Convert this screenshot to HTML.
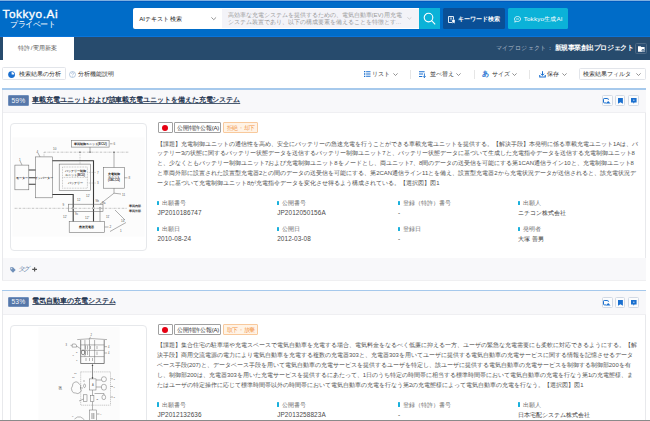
<!DOCTYPE html>
<html><head><meta charset="utf-8">
<style>
*{box-sizing:border-box;margin:0;padding:0}
html,body{width:650px;height:421px;overflow:hidden;background:#fff;font-family:"Liberation Sans",sans-serif;color:#333}
.abs{position:absolute}
.t{position:absolute;line-height:10px;white-space:nowrap}
svg{position:absolute;overflow:visible}
</style></head><body>
<div class="abs" style="left:0px;top:0px;width:650.00px;height:37.00px;background:#006cc8"></div>
<div class="abs" style="left:0px;top:0px;width:650.00px;height:1.00px;background:#7fb0e0"></div>
<div class="abs" style="left:0px;top:1px;width:650.00px;height:1.00px;background:#005bbf"></div>
<div class="abs" style="left:0px;top:36px;width:650.00px;height:1.00px;background:#0a74da"></div>
<div class="t" style="left:2.4px;top:8.90px;font-size:11.800px;color:#fff;font-weight:normal;letter-spacing:0.6px;-webkit-text-stroke:0.35px #fff">Tokkyo.Ai</div>
<div class="t" style="left:10.4px;top:19.70px;font-size:7.500px;color:#fff;font-weight:normal;letter-spacing:-0.500px;">プライベート</div>
<div class="abs" style="left:132.5px;top:8.2px;width:286.70px;height:20.70px;background:#fff;border-radius:2px 0 0 2px"></div>
<div class="t" style="left:139.2px;top:13.60px;font-size:6.100px;color:#222;font-weight:normal;letter-spacing:0.100px;">AIテキスト検索</div>
<svg class="abs" style="left:211px;top:17.3px" width="5.5" height="3.2" viewBox="0 0 5.5 3.2"><path d="M0.4 0.4 L2.75 2.7 L5.1 0.4" fill="none" stroke="#777" stroke-width="0.8"/></svg>
<div class="abs" style="left:222px;top:9.2px;width:197.20px;height:18.80px;background:#f3f3f8"></div>
<div class="t" style="left:227.5px;top:9.50px;font-size:6.000px;color:#9a9a9a;font-weight:normal;">高効率な充電システムを提供するための、電気自動車(EV)用充電</div>
<div class="t" style="left:227.5px;top:17.20px;font-size:6.000px;color:#9a9a9a;font-weight:normal;">システム装置であり、以下の構成要素を備えることを特徴とす…</div>
<svg class="abs" style="left:407px;top:17.4px" width="4.8" height="2.6" viewBox="0 0 4.8 2.6"><path d="M0.4 0.4 L2.4 2.1 L4.3999999999999995 0.4" fill="none" stroke="#bbb" stroke-width="0.6"/></svg>
<div class="abs" style="left:419.1px;top:8.2px;width:20.90px;height:20.70px;background:#0bb2d8"></div>
<svg style="left:419.1px;top:8.2px" width="21" height="21" viewBox="0 0 21 21"><circle cx="9.5" cy="9.6" r="4.3" fill="none" stroke="#fff" stroke-width="1.1"/><path d="M12.6 12.7 L16.2 16.3" stroke="#fff" stroke-width="1.1"/></svg>
<div class="abs" style="left:443.2px;top:8.4px;width:62.20px;height:20.40px;background:#0a4f96;border-radius:1.5px"></div>
<svg style="left:448.2px;top:15.7px" width="7.2" height="7" viewBox="0 0 7.2 7"><path d="M4 6.5 H0.5 V0.5 H5.5 V3.5" fill="none" stroke="#eef3fa" stroke-width="0.95"/><path d="M1.8 2 H4.2 M3 2 V4.6" stroke="#eef3fa" stroke-width="0.7"/><circle cx="5.5" cy="5" r="1.5" fill="#fff"/><path d="M4.3 6.9 Q5.5 5.8 6.9 6.9" stroke="#fff" stroke-width="0.9" fill="none"/></svg>
<div class="t" style="left:458.3px;top:13.80px;font-size:5.900px;color:#fff;font-weight:bold;letter-spacing:-0.100px;">キーワード検索</div>
<div class="abs" style="left:508.2px;top:8.2px;width:59.70px;height:20.70px;background:#0bb2d8;border-radius:1.5px"></div>
<svg style="left:513.5px;top:15.8px" width="7" height="7" viewBox="0 0 7 7"><path d="M3.5 0.5 C5.5 0.5 6.5 1.6 6.5 3 C6.5 4.5 5.4 5.5 3.5 5.5 C3 5.5 2.5 5.4 2.1 5.3 L0.8 6.2 L1.1 4.7 C0.7 4.3 0.5 3.7 0.5 3 C0.5 1.6 1.5 0.5 3.5 0.5 Z" fill="none" stroke="#fff" stroke-width="0.75"/><path d="M2 3 H5" stroke="#fff" stroke-width="0.7"/></svg>
<div class="t" style="left:523.7px;top:13.90px;font-size:6.200px;color:#fff;font-weight:normal;letter-spacing:0.200px;">Tokkyo生成AI</div>
<div class="abs" style="left:0px;top:37px;width:650.00px;height:22.60px;background:#274b6d"></div>
<div class="abs" style="left:2.7px;top:37px;width:71.10px;height:22.60px;background:#fff"></div>
<div class="t" style="left:18.3px;top:43.40px;font-size:6.200px;color:#555;font-weight:normal;letter-spacing:0.200px;">特許/実用新案</div>
<div class="t" style="left:495.7px;top:43.30px;font-size:6.400px;color:#b0bccb;font-weight:normal;letter-spacing:0.400px;">マイプロジェクト：</div>
<div class="t" style="left:554.6px;top:43.30px;font-size:6.550px;color:#fff;font-weight:bold;letter-spacing:-0.450px;">新規事業創出プロジェクト</div>
<div class="abs" style="left:635px;top:43.4px;width:11.60px;height:10.80px;border:0.6px solid #4d6985;border-radius:1.5px;background:#2b4f73"></div>
<svg style="left:637.5px;top:46px" width="7" height="6" viewBox="0 0 7 6"><path d="M0 0.3 H2.6 L3.3 1 H6.6 V5.7 H0 Z" fill="#fff"/><circle cx="5" cy="4.2" r="1.3" fill="#2b4f73"/><circle cx="5" cy="4.2" r="0.6" fill="#fff"/></svg>
<div class="abs" style="left:0px;top:59.6px;width:650.00px;height:28.40px;background:#fff"></div>
<div class="abs" style="left:2.4px;top:67px;width:63.60px;height:13.40px;border:0.6px solid #e2e5ea;border-radius:1.5px;background:#fff"></div>
<svg style="left:7.8px;top:70.8px" width="7.2" height="7.2" viewBox="0 0 8 8"><circle cx="4" cy="4" r="3.8" fill="#1a6fcf"/><path d="M4 4 V1 A3 3 0 0 1 7 4 Z" fill="#fff"/></svg>
<div class="t" style="left:18.6px;top:69.20px;font-size:6.000px;color:#333;font-weight:normal;">検索結果の分析</div>
<svg style="left:69.3px;top:70.8px" width="7" height="7" viewBox="0 0 7 7"><circle cx="3.5" cy="3.5" r="3" fill="none" stroke="#8aa7cc" stroke-width="0.6"/><path d="M2.5 2.7 C2.5 1.3 4.6 1.3 4.6 2.6 C4.6 3.4 3.5 3.4 3.5 4.4" fill="none" stroke="#8aa7cc" stroke-width="0.6"/><circle cx="3.5" cy="5.4" r="0.35" fill="#8aa7cc"/></svg>
<div class="t" style="left:78px;top:69.20px;font-size:6.000px;color:#333;font-weight:normal;">分析機能説明</div>
<svg style="left:363.8px;top:71.2px" width="6.5" height="6" viewBox="0 0 6.5 6"><path d="M0 0 H1.3 V1.3 H0Z M0 2.35 H1.3 V3.65 H0Z M0 4.7 H1.3 V6 H0Z M2.1 0.15 H6.5 V1.15 H2.1Z M2.1 2.5 H6.5 V3.5 H2.1Z M2.1 4.85 H6.5 V5.85 H2.1Z" fill="#1a6fcf"/></svg>
<div class="t" style="left:372px;top:69.30px;font-size:6.000px;color:#333;font-weight:normal;">リスト</div>
<svg class="abs" style="left:392.8px;top:72.6px" width="5" height="3" viewBox="0 0 5 3"><path d="M0.4 0.4 L2.5 2.5 L4.6 0.4" fill="none" stroke="#666" stroke-width="0.7"/></svg>
<div class="abs" style="left:410.1px;top:70px;width:0.60px;height:9.00px;background:#e6e6e6"></div>
<svg style="left:419px;top:70.8px" width="7" height="7" viewBox="0 0 7 7"><path d="M0 0.3 H5.6 V1.3 H0Z M0 2.6 H4 V3.6 H0Z M0 4.9 H3.3 V5.9 H0Z" fill="#1a6fcf"/><path d="M5.4 2.4 V6.6 M4.2 5.3 L5.4 6.6 L6.6 5.3" fill="none" stroke="#1a6fcf" stroke-width="0.9"/></svg>
<div class="t" style="left:429.8px;top:69.30px;font-size:6.000px;color:#333;font-weight:normal;">並べ替え</div>
<svg class="abs" style="left:455.6px;top:72.6px" width="5" height="3" viewBox="0 0 5 3"><path d="M0.4 0.4 L2.5 2.5 L4.6 0.4" fill="none" stroke="#666" stroke-width="0.7"/></svg>
<div class="abs" style="left:473.8px;top:70px;width:0.60px;height:9.00px;background:#e6e6e6"></div>
<div class="t" style="left:482.3px;top:69.10px;font-size:7.200px;color:#1a6fcf;font-weight:bold;">あ</div>
<div class="t" style="left:491.8px;top:69.30px;font-size:6.000px;color:#333;font-weight:normal;">サイズ</div>
<svg class="abs" style="left:511.8px;top:72.6px" width="5" height="3" viewBox="0 0 5 3"><path d="M0.4 0.4 L2.5 2.5 L4.6 0.4" fill="none" stroke="#666" stroke-width="0.7"/></svg>
<div class="abs" style="left:529.4px;top:70px;width:0.60px;height:9.00px;background:#e6e6e6"></div>
<svg style="left:538.8px;top:70.8px" width="7" height="7" viewBox="0 0 7 7"><path d="M3.5 0.2 V4.3 M1.9 2.7 L3.5 4.4 L5.1 2.7" fill="none" stroke="#1a6fcf" stroke-width="1"/><path d="M0.2 4 V6.6 H6.8 V4 H5.7 V5.4 H1.3 V4 Z" fill="#1a6fcf"/></svg>
<div class="t" style="left:547.4px;top:69.30px;font-size:6.000px;color:#333;font-weight:normal;">保存</div>
<svg class="abs" style="left:562px;top:72.6px" width="5" height="3" viewBox="0 0 5 3"><path d="M0.4 0.4 L2.5 2.5 L4.6 0.4" fill="none" stroke="#666" stroke-width="0.7"/></svg>
<div class="abs" style="left:578.5px;top:67.6px;width:67.50px;height:12.70px;border:0.6px solid #e2e5ea;border-radius:1.5px;background:#fff"></div>
<div class="t" style="left:583.3px;top:69.00px;font-size:6.000px;color:#333;font-weight:normal;">検索結果フィルタ</div>
<svg class="abs" style="left:635.8px;top:72.6px" width="5" height="3" viewBox="0 0 5 3"><path d="M0.4 0.4 L2.5 2.5 L4.6 0.4" fill="none" stroke="#666" stroke-width="0.7"/></svg>
<div class="abs" style="left:2.2px;top:89.6px;width:644.20px;height:190.40px;background:#fff;border-left:0.8px solid #e8e9ec;border-right:0.8px solid #e8e9ec"></div>
<div class="abs" style="left:2.4px;top:88px;width:643.60px;height:1.60px;background:#a6c9ec"></div>
<div class="abs" style="left:3.3px;top:89.6px;width:642.30px;height:23.40px;background:#f8f8fa;border-bottom:0.5px solid #efeff2"></div>
<div class="abs" style="left:7.8px;top:95.1px;width:20.90px;height:10.70px;background:#5677a9;border:0.5px solid #7190bd;border-radius:1px"></div>
<div class="t" style="left:11.5px;top:95.70px;font-size:6.700px;color:#f4f7fb;font-weight:normal;letter-spacing:0.1px">59%</div>
<div class="t" style="left:32.3px;top:94.60px;font-size:6.930px;color:#1f3550;font-weight:bold;letter-spacing:-0.070px;text-decoration:underline;text-underline-offset:1px;text-decoration-thickness:0.55px;text-decoration-color:#4a5b70">車載充電ユニットおよび該車載充電ユニットを備えた充電システム</div>
<div class="abs" style="left:601.7px;top:95.2px;width:10.90px;height:11.30px;background:#fbfcfd;border:0.7px solid #d3dae5;border-radius:1.5px"></div>
<div class="abs" style="left:614.5px;top:95.2px;width:10.90px;height:11.30px;background:#fbfcfd;border:0.7px solid #d3dae5;border-radius:1.5px"></div>
<div class="abs" style="left:627.8px;top:95.2px;width:10.90px;height:11.30px;background:#fbfcfd;border:0.7px solid #d3dae5;border-radius:1.5px"></div>
<svg style="left:603.4px;top:98px" width="7.6" height="5.4" viewBox="0 0 7.6 5.4"><path d="M3.2 4.9 H1.2 Q0.5 4.9 0.5 4.2 V1.2 Q0.5 0.5 1.2 0.5 H4.6 Q5.3 0.5 5.3 1.2 V2" fill="none" stroke="#1a6fcf" stroke-width="1"/><path d="M2.8 5.4 L5.2 2.9 L7.6 5.4 Z" fill="#1a6fcf"/></svg>
<svg style="left:617.6px;top:98px" width="4.9" height="5.7" viewBox="0 0 4.9 5.7"><path d="M0 0 H4.9 V5.7 L2.45 4.3 L0 5.7 Z" fill="#1a6fcf"/></svg>
<svg style="left:630.7px;top:98px" width="5.6" height="5.7" viewBox="0 0 5.6 5.7"><path d="M0 0 H5.6 V4.5 H3.4 L2.8 5.7 L2.2 4.5 H0 Z" fill="#1a6fcf"/><path d="M2.1 2.2 H3.5" stroke="#fff" stroke-width="0.8"/></svg>
<div class="abs" style="left:10.1px;top:122.8px;width:136.60px;height:128.00px;border:0.8px solid #e6e8eb;border-radius:4px;background:#fff"></div>
<svg style="left:0;top:0" width="650" height="421" viewBox="0 0 650 421"><rect x="12.5" y="137.5" width="132" height="99" fill="#fcfcfc"/><path d="M44 152.2 H129" stroke="#8a8a8a" stroke-width="0.5" fill="none" stroke-dasharray="2.2 0.8 0.5 0.8"/><path d="M44 152.2 V156.9" stroke="#8a8a8a" stroke-width="0.5" fill="none" stroke-dasharray="0.8 0.8"/><rect x="71.3" y="140.3" width="37.8" height="6.8" stroke="#6a6a6a" stroke-width="0.55" fill="none" fill="#fff"/><text transform="translate(90.2,144.9) scale(0.1)" font-size="33.0" fill="#333" text-anchor="middle" font-weight="bold" font-family="Liberation Sans">車両制御ユニット(ECU)</text><path d="M90 147.1 V152.2" stroke="#6a6a6a" stroke-width="0.55" fill="none"/><path d="M110 143.8 H112.5" stroke="#6a6a6a" stroke-width="0.55" fill="none"/><text transform="translate(113.5,145) scale(0.1)" font-size="30.0" fill="#555" text-anchor="start" font-weight="normal" font-family="Liberation Sans">6</text><rect x="79.4" y="151.6" width="1.2" height="1.2" fill="#555"/><rect x="89.4" y="151.6" width="1.2" height="1.2" fill="#555"/><rect x="113.4" y="151.6" width="1.2" height="1.2" fill="#555"/><path d="M80 152.2 V164.1" stroke="#8a8a8a" stroke-width="0.5" fill="none" stroke-dasharray="0.8 0.8"/><path d="M114 152.2 V167.4" stroke="#6a6a6a" stroke-width="0.55" fill="none"/><rect x="14.9" y="165.1" width="13.9" height="24.7" stroke="#6a6a6a" stroke-width="0.55" fill="none" fill="#fff"/><text transform="translate(21.9,179) scale(0.1)" font-size="32.0" fill="#222" text-anchor="middle" font-weight="bold" font-family="Liberation Sans">モーター</text><path d="M20 161 L22 165" stroke="#6a6a6a" stroke-width="0.55" fill="none"/><text transform="translate(19,160.5) scale(0.1)" font-size="30.0" fill="#555" text-anchor="start" font-weight="normal" font-family="Liberation Sans">1</text><rect x="35.5" y="156.9" width="16.9" height="40.9" stroke="#6a6a6a" stroke-width="0.55" fill="none" fill="#fff"/><text transform="translate(44,179) scale(0.1)" font-size="30.0" fill="#222" text-anchor="middle" font-weight="bold" font-family="Liberation Sans">インバーター</text><path d="M38 153 L40 156.9" stroke="#6a6a6a" stroke-width="0.55" fill="none"/><text transform="translate(36.5,152.5) scale(0.1)" font-size="30.0" fill="#555" text-anchor="start" font-weight="normal" font-family="Liberation Sans">4</text><text transform="translate(53,149.8) scale(0.1)" font-size="30.0" fill="#555" text-anchor="start" font-weight="normal" font-family="Liberation Sans">10</text><path d="M28.8 170 H35.5 M28.8 177.8 H35.5 M28.8 184.3 H35.5" stroke="#3a3a3a" stroke-width="1.1" fill="none"/><path d="M52.4 160.7 H93.5 V221.5" stroke="#3a3a3a" stroke-width="1.1" fill="none"/><path d="M52.4 194.5 H73.2 V221.5" stroke="#3a3a3a" stroke-width="1.1" fill="none"/><rect x="59.2" y="164.1" width="31.1" height="26.6" stroke="#6a6a6a" stroke-width="0.55" fill="none" fill="#fff"/><rect x="62.5" y="167" width="24.9" height="21.2" stroke="#8a8a8a" stroke-width="0.5" fill="none" stroke-dasharray="0.8 0.8"/><path d="M62.5 177.4 H87.4" stroke="#8a8a8a" stroke-width="0.5" fill="none" stroke-dasharray="0.8 0.8"/><text transform="translate(75,171.6) scale(0.1)" font-size="28.0" fill="#333" text-anchor="middle" font-weight="bold" font-family="Liberation Sans">バッテリー制御</text><text transform="translate(75,175.6) scale(0.1)" font-size="28.0" fill="#333" text-anchor="middle" font-weight="bold" font-family="Liberation Sans">ユニット(BCU)</text><text transform="translate(75,184.2) scale(0.1)" font-size="29.0" fill="#333" text-anchor="middle" font-weight="bold" font-family="Liberation Sans">バッテリー</text><path d="M87.4 172.4 H96" stroke="#8a8a8a" stroke-width="0.5" fill="none" stroke-dasharray="0.8 0.8"/><text transform="translate(97,173.6) scale(0.1)" font-size="30.0" fill="#555" text-anchor="start" font-weight="normal" font-family="Liberation Sans">7</text><path d="M87.4 183 H96" stroke="#8a8a8a" stroke-width="0.5" fill="none" stroke-dasharray="0.8 0.8"/><text transform="translate(97,184.2) scale(0.1)" font-size="30.0" fill="#555" text-anchor="start" font-weight="normal" font-family="Liberation Sans">3</text><rect x="103.6" y="167.4" width="20.8" height="20.8" stroke="#6a6a6a" stroke-width="0.55" fill="none" fill="#fff"/><text transform="translate(114,175.4) scale(0.1)" font-size="28.0" fill="#222" text-anchor="middle" font-weight="bold" font-family="Liberation Sans">充電制御</text><text transform="translate(114,178.4) scale(0.1)" font-size="28.0" fill="#222" text-anchor="middle" font-weight="bold" font-family="Liberation Sans">ユニット</text><text transform="translate(114,181.4) scale(0.1)" font-size="26.0" fill="#222" text-anchor="middle" font-weight="bold" font-family="Liberation Sans">(OBC,CU)</text><path d="M124.4 177.8 H127.5" stroke="#6a6a6a" stroke-width="0.55" fill="none"/><text transform="translate(128.5,179) scale(0.1)" font-size="30.0" fill="#555" text-anchor="start" font-weight="normal" font-family="Liberation Sans">8</text><path d="M114 188.2 V193.2 L100 204.2 M114 193.2 L121 194" stroke="#6a6a6a" stroke-width="0.55" fill="none"/><text transform="translate(122,195.5) scale(0.1)" font-size="30.0" fill="#555" text-anchor="start" font-weight="normal" font-family="Liberation Sans">11</text><path d="M14.6 208.3 H127" stroke="#8a8a8a" stroke-width="0.5" fill="none" stroke-dasharray="2.2 0.8 0.5 0.8"/><rect x="68.5" y="204.2" width="34.5" height="7.3" stroke="#6a6a6a" stroke-width="0.55" fill="none"/><circle cx="73.1" cy="208.2" r="0.9" fill="#fff" stroke="#555" stroke-width="0.45"/><circle cx="93.4" cy="208.2" r="0.9" fill="#fff" stroke="#555" stroke-width="0.45"/><circle cx="100" cy="208.2" r="0.9" fill="#fff" stroke="#555" stroke-width="0.45"/><path d="M100 209.1 V221.5" stroke="#6a6a6a" stroke-width="0.55" fill="none"/><text transform="translate(128.5,206.5) scale(0.1)" font-size="28.0" fill="#333" text-anchor="start" font-weight="bold" font-family="Liberation Sans">車両内部</text><text transform="translate(128.5,211.6) scale(0.1)" font-size="28.0" fill="#333" text-anchor="start" font-weight="bold" font-family="Liberation Sans">車両外部</text><text transform="translate(62.6,206) scale(0.1)" font-size="30.0" fill="#555" text-anchor="start" font-weight="normal" font-family="Liberation Sans">9</text><text transform="translate(77,200.5) scale(0.1)" font-size="30.0" fill="#555" text-anchor="start" font-weight="normal" font-family="Liberation Sans">12</text><text transform="translate(86,197.4) scale(0.1)" font-size="30.0" fill="#555" text-anchor="start" font-weight="normal" font-family="Liberation Sans">12'</text><text transform="translate(95.5,202) scale(0.1)" font-size="30.0" fill="#555" text-anchor="start" font-weight="normal" font-family="Liberation Sans">9b</text><text transform="translate(102,203.6) scale(0.1)" font-size="30.0" fill="#555" text-anchor="start" font-weight="normal" font-family="Liberation Sans">9a</text><text transform="translate(75,215) scale(0.1)" font-size="30.0" fill="#555" text-anchor="start" font-weight="normal" font-family="Liberation Sans">9c</text><text transform="translate(63,218) scale(0.1)" font-size="30.0" fill="#555" text-anchor="start" font-weight="normal" font-family="Liberation Sans">12'</text><text transform="translate(85,219) scale(0.1)" font-size="30.0" fill="#555" text-anchor="start" font-weight="normal" font-family="Liberation Sans">12"</text><text transform="translate(106,218) scale(0.1)" font-size="30.0" fill="#555" text-anchor="start" font-weight="normal" font-family="Liberation Sans">11'</text><path d="M115 210 L125 220" stroke="#6a6a6a" stroke-width="0.55" fill="none"/><text transform="translate(121,222) scale(0.1)" font-size="30.0" fill="#555" text-anchor="start" font-weight="normal" font-family="Liberation Sans">14</text><rect x="69.2" y="221.5" width="35.4" height="10.8" stroke="#6a6a6a" stroke-width="0.55" fill="none" fill="#fff"/><text transform="translate(86.9,228.3) scale(0.1)" font-size="32.0" fill="#333" text-anchor="middle" font-weight="bold" font-family="Liberation Sans">急速充電器</text><path d="M104.6 227 H108.5" stroke="#6a6a6a" stroke-width="0.55" fill="none"/><text transform="translate(109.5,228.2) scale(0.1)" font-size="30.0" fill="#555" text-anchor="start" font-weight="normal" font-family="Liberation Sans">2</text><path d="M110 231.5 L126 222.5" stroke="#6a6a6a" stroke-width="0.55" fill="none"/><text transform="translate(120,231.5) scale(0.1)" font-size="30.0" fill="#555" text-anchor="start" font-weight="normal" font-family="Liberation Sans">1</text></svg>
<div class="abs" style="left:157.5px;top:122.4px;width:15.20px;height:11.10px;border:0.6px solid #a0a0a0;border-radius:1px;background:#fff"></div>
<svg style="left:162.1px;top:125px" width="6" height="6" viewBox="0 0 6 6"><circle cx="3" cy="3" r="3" fill="#e60012"/></svg>
<div class="abs" style="left:174.2px;top:122.4px;width:47.00px;height:11.10px;border:0.6px solid #a0a0a0;border-radius:1px;background:#fff"></div>
<div class="t" style="left:177.2px;top:123.00px;font-size:6.000px;color:#333;font-weight:normal;letter-spacing:-0.25px">公開特許公報(A)</div>
<div class="abs" style="left:223.4px;top:122.4px;width:34.70px;height:11.10px;border:0.7px solid #f8c99c;border-radius:1px;background:#fff3e6"></div>
<div class="t" style="left:226.8px;top:123.00px;font-size:6.000px;color:#f39a50;font-weight:normal;letter-spacing:-0.4px">拒絶・却下</div>
<div class="t" style="left:157px;top:138.50px;font-size:5.930px;color:#505050;font-weight:normal;">【課題】充電制御ユニットの通信性を高め、安全にバッテリーの急速充電を行うことができる車載充電ユニットを提供する。【解決手段】本発明に係る車載充電ユニット<span style="letter-spacing:0;font-size:5.93px">1A</span>は、バ</div>
<div class="t" style="left:157px;top:148.40px;font-size:5.930px;color:#505050;font-weight:normal;">ッテリー<span style="letter-spacing:0;font-size:5.93px">3</span>の状態に関するバッテリー状態データを送信するバッテリー制御ユニット<span style="letter-spacing:0;font-size:5.93px">7</span>と、バッテリー状態データに基づいて生成した充電指令データを送信する充電制御ユニット<span style="letter-spacing:0;font-size:5.93px">8</span></div>
<div class="t" style="left:157px;top:158.30px;font-size:5.930px;color:#505050;font-weight:normal;">と、少なくともバッテリー制御ユニット<span style="letter-spacing:0;font-size:5.93px">7</span>および充電制御ユニット<span style="letter-spacing:0;font-size:5.93px">8</span>をノードとし、両ユニット<span style="letter-spacing:0;font-size:5.93px">7</span>、<span style="letter-spacing:0;font-size:5.93px">8</span>間のデータの送受信を可能にする第<span style="letter-spacing:0;font-size:5.93px">1CAN</span>通信ライン<span style="letter-spacing:0;font-size:5.93px">10</span>と、充電制御ユニット<span style="letter-spacing:0;font-size:5.93px">8</span></div>
<div class="t" style="left:157px;top:168.20px;font-size:5.930px;color:#505050;font-weight:normal;">と車両外部に設置された設置型充電器<span style="letter-spacing:0;font-size:5.93px">2</span>との間のデータの送受信を可能にする、第<span style="letter-spacing:0;font-size:5.93px">2CAN</span>通信ライン<span style="letter-spacing:0;font-size:5.93px">11</span>とを備え、設置型充電器<span style="letter-spacing:0;font-size:5.93px">2</span>から充電状況データが送信されると、該充電状況デ</div>
<div class="t" style="left:157px;top:178.10px;font-size:5.930px;color:#505050;font-weight:normal;">ータに基づいて充電制御ユニット<span style="letter-spacing:0;font-size:5.93px">8</span>が充電指令データを変化させ得るよう構成されている。【選択図】図<span style="letter-spacing:0;font-size:5.93px">1</span></div>
<div class="abs" style="left:157.4px;top:200.7px;width:1.50px;height:4.60px;background:#1ab0dc;border-radius:0.6px"></div>
<div class="t" style="left:161.9px;top:198.00px;font-size:5.900px;color:#6a6a6a;font-weight:normal;">出願番号</div>
<div class="t" style="left:157.4px;top:207.80px;font-size:6.400px;color:#4a4a4a;font-weight:normal;letter-spacing:0.1px">JP2010186747</div>
<div class="abs" style="left:277.2px;top:200.7px;width:1.50px;height:4.60px;background:#1ab0dc;border-radius:0.6px"></div>
<div class="t" style="left:281.7px;top:198.00px;font-size:5.900px;color:#6a6a6a;font-weight:normal;">公開番号</div>
<div class="t" style="left:277.2px;top:207.80px;font-size:6.400px;color:#4a4a4a;font-weight:normal;letter-spacing:0.1px">JP2012050156A</div>
<div class="abs" style="left:398px;top:200.7px;width:1.50px;height:4.60px;background:#1ab0dc;border-radius:0.6px"></div>
<div class="t" style="left:402.5px;top:198.00px;font-size:5.900px;color:#6a6a6a;font-weight:normal;">登録（特許）番号</div>
<div class="t" style="left:398px;top:207.80px;font-size:6.400px;color:#4a4a4a;font-weight:normal;letter-spacing:0.1px">-</div>
<div class="abs" style="left:518px;top:200.7px;width:1.50px;height:4.60px;background:#1ab0dc;border-radius:0.6px"></div>
<div class="t" style="left:522.5px;top:198.00px;font-size:5.900px;color:#6a6a6a;font-weight:normal;">出願人</div>
<div class="t" style="left:518px;top:207.80px;font-size:5.970px;color:#3a3a3a;font-weight:normal;letter-spacing:-0.030px;">ニチコン株式会社</div>
<div class="abs" style="left:157.4px;top:226.9px;width:1.50px;height:4.60px;background:#1ab0dc;border-radius:0.6px"></div>
<div class="t" style="left:161.9px;top:224.20px;font-size:5.900px;color:#6a6a6a;font-weight:normal;">出願日</div>
<div class="t" style="left:157.4px;top:234.20px;font-size:6.400px;color:#4a4a4a;font-weight:normal;letter-spacing:0.1px">2010-08-24</div>
<div class="abs" style="left:277.2px;top:226.9px;width:1.50px;height:4.60px;background:#1ab0dc;border-radius:0.6px"></div>
<div class="t" style="left:281.7px;top:224.20px;font-size:5.900px;color:#6a6a6a;font-weight:normal;">公開日</div>
<div class="t" style="left:277.2px;top:234.20px;font-size:6.400px;color:#4a4a4a;font-weight:normal;letter-spacing:0.1px">2012-03-08</div>
<div class="abs" style="left:398px;top:226.9px;width:1.50px;height:4.60px;background:#1ab0dc;border-radius:0.6px"></div>
<div class="t" style="left:402.5px;top:224.20px;font-size:5.900px;color:#6a6a6a;font-weight:normal;">登録日</div>
<div class="t" style="left:398px;top:234.20px;font-size:6.400px;color:#4a4a4a;font-weight:normal;letter-spacing:0.1px">-</div>
<div class="abs" style="left:518px;top:226.9px;width:1.50px;height:4.60px;background:#1ab0dc;border-radius:0.6px"></div>
<div class="t" style="left:522.5px;top:224.20px;font-size:5.900px;color:#6a6a6a;font-weight:normal;">発明者</div>
<div class="t" style="left:518px;top:234.20px;font-size:5.970px;color:#3a3a3a;font-weight:normal;letter-spacing:-0.030px;">大塚 善男</div>
<div class="abs" style="left:3.1px;top:258.3px;width:642.50px;height:22.10px;background:#f8f8fa"></div>
<div class="abs" style="left:2.3px;top:280.4px;width:644.10px;height:0.80px;background:#efeff1"></div>
<svg style="left:10px;top:266.8px" width="6" height="6" viewBox="0 0 6 6"><path d="M0.3 0.3 H3 L5.7 3 L3 5.7 L0.3 3 Z" fill="#6f8fb8"/><circle cx="1.7" cy="1.7" r="0.6" fill="#f8f8fa"/></svg>
<div class="t" style="left:17.6px;top:264.40px;font-size:6.800px;color:#6f88aa;font-weight:normal;letter-spacing:-1.100px;transform:skewX(-12deg)">タグ</div>
<svg style="left:32.4px;top:267.4px" width="5.2" height="4.8" viewBox="0 0 5.2 4.8"><path d="M2.6 0.2 V4.6 M0.2 2.4 H5" stroke="#555" stroke-width="1.2"/></svg>
<div class="abs" style="left:2.2px;top:291.3px;width:644.20px;height:398.40px;background:#fff;border-left:0.8px solid #e8e9ec;border-right:0.8px solid #e8e9ec"></div>
<div class="abs" style="left:2.4px;top:289.7px;width:643.60px;height:1.60px;background:#a6c9ec"></div>
<div class="abs" style="left:3.3px;top:291.3px;width:642.30px;height:23.40px;background:#f8f8fa;border-bottom:0.5px solid #efeff2"></div>
<div class="abs" style="left:7.8px;top:296.8px;width:20.90px;height:10.70px;background:#5677a9;border:0.5px solid #7190bd;border-radius:1px"></div>
<div class="t" style="left:11.5px;top:297.40px;font-size:6.700px;color:#f4f7fb;font-weight:normal;letter-spacing:0.1px">53%</div>
<div class="t" style="left:32.3px;top:296.30px;font-size:6.930px;color:#1f3550;font-weight:bold;letter-spacing:-0.070px;text-decoration:underline;text-underline-offset:1px;text-decoration-thickness:0.55px;text-decoration-color:#4a5b70">電気自動車の充電システム</div>
<div class="abs" style="left:601.7px;top:296.9px;width:10.90px;height:11.30px;background:#fbfcfd;border:0.7px solid #d3dae5;border-radius:1.5px"></div>
<div class="abs" style="left:614.5px;top:296.9px;width:10.90px;height:11.30px;background:#fbfcfd;border:0.7px solid #d3dae5;border-radius:1.5px"></div>
<div class="abs" style="left:627.8px;top:296.9px;width:10.90px;height:11.30px;background:#fbfcfd;border:0.7px solid #d3dae5;border-radius:1.5px"></div>
<svg style="left:603.4px;top:299.7px" width="7.6" height="5.4" viewBox="0 0 7.6 5.4"><path d="M3.2 4.9 H1.2 Q0.5 4.9 0.5 4.2 V1.2 Q0.5 0.5 1.2 0.5 H4.6 Q5.3 0.5 5.3 1.2 V2" fill="none" stroke="#1a6fcf" stroke-width="1"/><path d="M2.8 5.4 L5.2 2.9 L7.6 5.4 Z" fill="#1a6fcf"/></svg>
<svg style="left:617.6px;top:299.7px" width="4.9" height="5.7" viewBox="0 0 4.9 5.7"><path d="M0 0 H4.9 V5.7 L2.45 4.3 L0 5.7 Z" fill="#1a6fcf"/></svg>
<svg style="left:630.7px;top:299.7px" width="5.6" height="5.7" viewBox="0 0 5.6 5.7"><path d="M0 0 H5.6 V4.5 H3.4 L2.8 5.7 L2.2 4.5 H0 Z" fill="#1a6fcf"/><path d="M2.1 2.2 H3.5" stroke="#fff" stroke-width="0.8"/></svg>
<div class="abs" style="left:10.1px;top:324.5px;width:136.60px;height:128.00px;border:0.8px solid #e6e8eb;border-radius:4px;background:#fff"></div>
<svg style="left:0;top:0" width="650" height="421" viewBox="0 0 650 421"><rect x="38.5" y="326.8" width="81" height="100" fill="#fcfcfc"/><path d="M77.2 339.6 Q92 337.6 107 339.6" stroke="#6a6a6a" stroke-width="0.5" fill="none"/><path d="M80.7 340 V363.5 H104.2 V340" stroke="#505050" stroke-width="0.7" fill="none"/><path d="M80.7 344.9 H104.2 M80.7 350.4 H104.2 M80.7 356.6 H104.2" stroke="#6a6a6a" stroke-width="0.5" fill="none"/><path d="M84.9 340 V356.6 M89.5 340 V356.6 M94.6 340 V363.5" stroke="#6a6a6a" stroke-width="0.5" fill="none"/><path d="M85.5 345.5 V349.5 M87.5 345.5 V349.5 M85.5 351 V355 M87.5 351 V355 M90.5 346 V349 M97 346 V349 M97 351.5 V355 M86 358 V361 M89.5 358 V361 M92.5 358 V361" stroke="#6a6a6a" stroke-width="0.5" fill="none"/><path d="M83 350 a1.6 2.4 0 1 0 0.1 0" stroke="#505050" stroke-width="0.7" fill="none"/><text transform="translate(90.5,336.2) scale(0.1)" font-size="26.0" fill="#555" text-anchor="start" font-weight="normal" font-family="Liberation Sans">2</text><path d="M90.5 336.8 L89 340" stroke="#6a6a6a" stroke-width="0.5" fill="none"/><path d="M70.5 345.3 H72 M72.5 344 h3 l1 1.5 v1.6 h-4.5 z" stroke="#6a6a6a" stroke-width="0.5" fill="none"/><text transform="translate(65.5,346.3) scale(0.1)" font-size="26.0" fill="#555" text-anchor="start" font-weight="normal" font-family="Liberation Sans">3</text><path d="M76.5 346 L81 349" stroke="#6a6a6a" stroke-width="0.5" fill="none"/><text transform="translate(76,352.5) scale(0.1)" font-size="25.0" fill="#555" text-anchor="start" font-weight="normal" font-family="Liberation Sans">5</text><text transform="translate(72.5,356) scale(0.1)" font-size="25.0" fill="#555" text-anchor="start" font-weight="normal" font-family="Liberation Sans">6</text><text transform="translate(76,361) scale(0.1)" font-size="25.0" fill="#555" text-anchor="start" font-weight="normal" font-family="Liberation Sans">7</text><path d="M104.2 346.7 H107" stroke="#6a6a6a" stroke-width="0.5" fill="none"/><text transform="translate(108,347.7) scale(0.1)" font-size="26.0" fill="#555" text-anchor="start" font-weight="normal" font-family="Liberation Sans">4</text><path d="M104.2 353 H107" stroke="#6a6a6a" stroke-width="0.5" fill="none"/><text transform="translate(108,354) scale(0.1)" font-size="26.0" fill="#555" text-anchor="start" font-weight="normal" font-family="Liberation Sans">4</text><path d="M92.5 364.5 V378.9" stroke="#444" stroke-width="0.6"/><path d="M91.6 366 L92.5 364.3 L93.4 366 Z M91.6 377.3 L92.5 379 L93.4 377.3 Z" fill="#444"/><rect x="80.7" y="371.9" width="29.8" height="33.3" stroke="#8a8a8a" stroke-width="0.45" fill="none" stroke-dasharray="1.2 0.7"/><rect x="89.7" y="378.9" width="6.3" height="11.1" stroke="#6a6a6a" stroke-width="0.5" fill="none" fill="#fff"/><text transform="translate(92.8,385.5) scale(0.1)" font-size="26.0" fill="#555" text-anchor="middle" font-weight="normal" font-family="Liberation Sans">A</text><rect x="101.5" y="376.8" width="4.8" height="4.8" rx="2" stroke="#6a6a6a" stroke-width="0.5" fill="none"/><rect x="101.5" y="384.4" width="4.8" height="5.6" rx="2" stroke="#6a6a6a" stroke-width="0.5" fill="none"/><path d="M96 380 H101.5 M96 387 H101.5 M94.5 393.5 H104 V395" stroke="#6a6a6a" stroke-width="0.5" fill="none"/><rect x="102" y="395" width="3.6" height="4.6" rx="1.8" stroke="#6a6a6a" stroke-width="0.5" fill="none"/><rect x="90.4" y="395.5" width="3.5" height="6.2" stroke="#6a6a6a" stroke-width="0.5" fill="none"/><rect x="83.5" y="394.8" width="3.5" height="6.9" stroke="#6a6a6a" stroke-width="0.5" fill="none"/><path d="M92.5 390 V395.5 M92.5 401.7 V410" stroke="#6a6a6a" stroke-width="0.5" fill="none"/><path d="M110.5 378.8 H113 M110.5 386.5 H113 M110.5 397 H113" stroke="#6a6a6a" stroke-width="0.5" fill="none"/><text transform="translate(113.5,379.8) scale(0.1)" font-size="25.0" fill="#555" text-anchor="start" font-weight="normal" font-family="Liberation Sans">8</text><text transform="translate(113.5,387.5) scale(0.1)" font-size="25.0" fill="#555" text-anchor="start" font-weight="normal" font-family="Liberation Sans">9</text><text transform="translate(113.5,398) scale(0.1)" font-size="25.0" fill="#555" text-anchor="start" font-weight="normal" font-family="Liberation Sans">8</text><text transform="translate(96.5,399.5) scale(0.1)" font-size="24.0" fill="#555" text-anchor="start" font-weight="normal" font-family="Liberation Sans">B</text><path d="M75 382 q-3 1 -2.5 4 q-2 2 -0.5 5 q1 2.5 3.5 2 q2.5 1.5 4.5 -0.5 q2.5 -1.5 0.5 -4 q1 -3.5 -1.5 -5 q-2 -2.5 -4 -1.5 z" stroke="#6a6a6a" stroke-width="0.5" fill="none"/><path d="M80 388 H83" stroke="#6a6a6a" stroke-width="0.5" fill="none"/><text transform="translate(72,378) scale(0.1)" font-size="24.0" fill="#555" text-anchor="start" font-weight="normal" font-family="Liberation Sans">10</text><text transform="translate(74,373.5) scale(0.1)" font-size="24.0" fill="#555" text-anchor="start" font-weight="normal" font-family="Liberation Sans">11</text><path d="M84.5 384 a1 1.8 0 1 0 0.1 0 M84 380 V382" stroke="#6a6a6a" stroke-width="0.5" fill="none"/><text transform="translate(58.5,385.5) rotate(90) scale(0.1)" font-size="26" fill="#555" font-family="Liberation Sans">図1</text><path d="M79 401 L83.5 399" stroke="#6a6a6a" stroke-width="0.5" fill="none"/><rect x="89.7" y="410" width="6.9" height="12" stroke="#6a6a6a" stroke-width="0.5" fill="none" fill="#fff"/><path d="M92 413 V419 M93.8 413 V419" stroke="#555" stroke-width="0.6"/><path d="M97 414 H99.5" stroke="#6a6a6a" stroke-width="0.5" fill="none"/><text transform="translate(100,414.8) scale(0.1)" font-size="25.0" fill="#555" text-anchor="start" font-weight="normal" font-family="Liberation Sans">4</text><path d="M74.5 419 q3 -3 6 -2 q2 1 4 3" stroke="#6a6a6a" stroke-width="0.5" fill="none"/><text transform="translate(72,417) scale(0.1)" font-size="24.0" fill="#555" text-anchor="start" font-weight="normal" font-family="Liberation Sans">6</text></svg>
<div class="abs" style="left:157.5px;top:324.1px;width:15.20px;height:11.10px;border:0.6px solid #a0a0a0;border-radius:1px;background:#fff"></div>
<svg style="left:162.1px;top:326.7px" width="6" height="6" viewBox="0 0 6 6"><circle cx="3" cy="3" r="3" fill="#e60012"/></svg>
<div class="abs" style="left:174.2px;top:324.1px;width:47.00px;height:11.10px;border:0.6px solid #a0a0a0;border-radius:1px;background:#fff"></div>
<div class="t" style="left:177.2px;top:324.70px;font-size:6.000px;color:#333;font-weight:normal;letter-spacing:-0.25px">公開特許公報(A)</div>
<div class="abs" style="left:223.4px;top:324.1px;width:34.70px;height:11.10px;border:0.7px solid #f8c99c;border-radius:1px;background:#fff3e6"></div>
<div class="t" style="left:226.8px;top:324.70px;font-size:6.000px;color:#f39a50;font-weight:normal;letter-spacing:-0.4px">取下・放棄</div>
<div class="t" style="left:157px;top:340.20px;font-size:5.930px;color:#505050;font-weight:normal;">【課題】集合住宅の駐車場や充電スペースで電気自動車を充電する場合、電気料金をなるべく低廉に抑える一方、ユーザの緊急な充電需要にも柔軟に対応できるようにする。【解</div>
<div class="t" style="left:157px;top:350.10px;font-size:5.930px;color:#505050;font-weight:normal;">決手段】商用交流電源の電力により電気自動車を充電する複数の充電器<span style="letter-spacing:0;font-size:5.93px">303</span>と、充電器<span style="letter-spacing:0;font-size:5.93px">303</span>を用いてユーザに提供する電気自動車の充電サービスに関する情報を記憶させるデータ</div>
<div class="t" style="left:157px;top:360.00px;font-size:5.930px;color:#505050;font-weight:normal;">ベース手段<span style="letter-spacing:0;font-size:5.93px">(207)</span>と、データベース手段を用いて電気自動車の充電サービスを提供するユーザを特定し、該ユーザに提供する電気自動車の充電サービスを制御する制御部<span style="letter-spacing:0;font-size:5.93px">200</span>を有</div>
<div class="t" style="left:157px;top:369.90px;font-size:5.930px;color:#505050;font-weight:normal;">し、制御部<span style="letter-spacing:0;font-size:5.93px">200</span>は、充電器<span style="letter-spacing:0;font-size:5.93px">303</span>を用いた充電サービスを提供するにあたって、<span style="letter-spacing:0;font-size:5.93px">1</span>日のうち特定の時間帯に相当する標準時間帯において電気自動車の充電を行なう第<span style="letter-spacing:0;font-size:5.93px">1</span>の充電態様、ま</div>
<div class="t" style="left:157px;top:379.80px;font-size:5.930px;color:#505050;font-weight:normal;">たはユーザの特定操作に応じて標準時間帯以外の時間帯において電気自動車の充電を行なう第<span style="letter-spacing:0;font-size:5.93px">2</span>の充電態様によって電気自動車の充電を行なう。【選択図】図<span style="letter-spacing:0;font-size:5.93px">1</span></div>
<div class="abs" style="left:157.4px;top:402.4px;width:1.50px;height:4.60px;background:#1ab0dc;border-radius:0.6px"></div>
<div class="t" style="left:161.9px;top:399.70px;font-size:5.900px;color:#6a6a6a;font-weight:normal;">出願番号</div>
<div class="t" style="left:157.4px;top:409.50px;font-size:6.400px;color:#4a4a4a;font-weight:normal;letter-spacing:0.1px">JP2012132636</div>
<div class="abs" style="left:277.2px;top:402.4px;width:1.50px;height:4.60px;background:#1ab0dc;border-radius:0.6px"></div>
<div class="t" style="left:281.7px;top:399.70px;font-size:5.900px;color:#6a6a6a;font-weight:normal;">公開番号</div>
<div class="t" style="left:277.2px;top:409.50px;font-size:6.400px;color:#4a4a4a;font-weight:normal;letter-spacing:0.1px">JP2013258823A</div>
<div class="abs" style="left:398px;top:402.4px;width:1.50px;height:4.60px;background:#1ab0dc;border-radius:0.6px"></div>
<div class="t" style="left:402.5px;top:399.70px;font-size:5.900px;color:#6a6a6a;font-weight:normal;">登録（特許）番号</div>
<div class="t" style="left:398px;top:409.50px;font-size:6.400px;color:#4a4a4a;font-weight:normal;letter-spacing:0.1px">-</div>
<div class="abs" style="left:518px;top:402.4px;width:1.50px;height:4.60px;background:#1ab0dc;border-radius:0.6px"></div>
<div class="t" style="left:522.5px;top:399.70px;font-size:5.900px;color:#6a6a6a;font-weight:normal;">出願人</div>
<div class="t" style="left:518px;top:409.50px;font-size:5.970px;color:#3a3a3a;font-weight:normal;letter-spacing:-0.030px;">日本宅配システム株式会社</div>
<div class="abs" style="left:0px;top:420px;width:650.00px;height:1.00px;background:#8a8a8a"></div>
</body></html>
